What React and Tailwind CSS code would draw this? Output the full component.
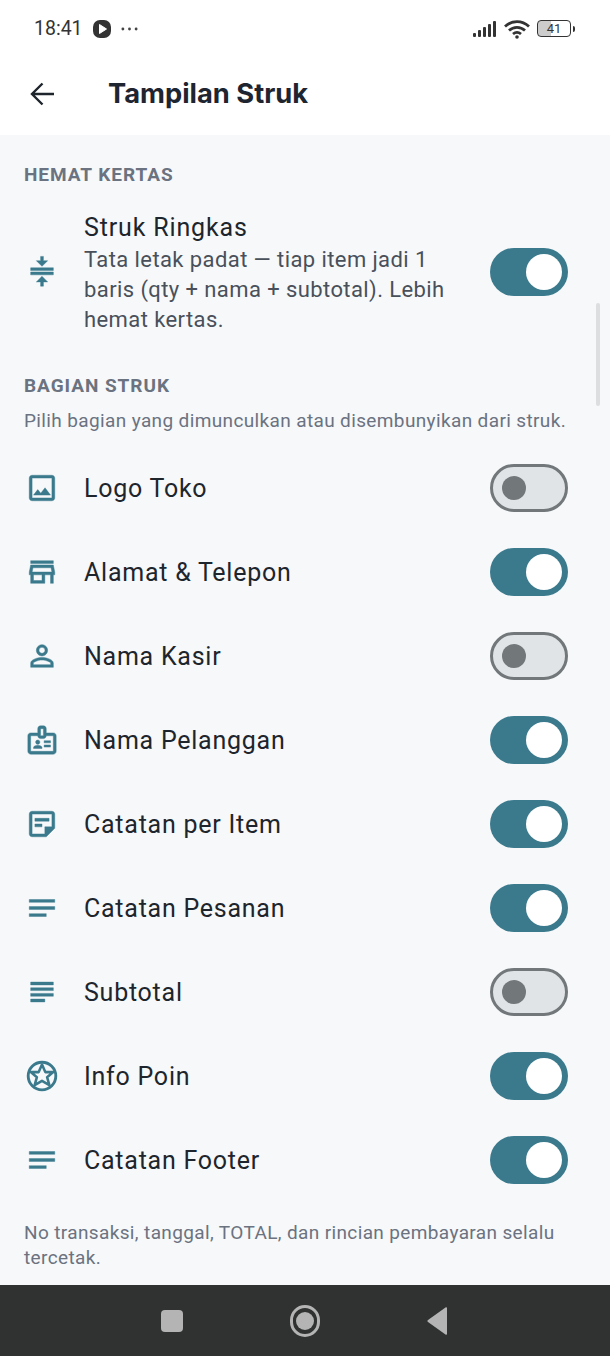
const TEAL = '#3a7a8c';

const ICONS = {
  compress: 'M4 12h16v2H4zM4 9h16v2H4zM16 4h-3V1h-2v3H8l4 4zM8 19h3v3h2v-3h3l-4-4z',
  image: 'M19 5v14H5V5h14m0-2H5c-1.1 0-2 .9-2 2v14c0 1.1.9 2 2 2h14c1.1 0 2-.9 2-2V5c0-1.1-.9-2-2-2zm-4.86 8.86l-3 3.87L9 13.14 6 17h12l-3.86-5.14z',
  store: 'M18.36 9l.6 3H5.04l.6-3h12.72M20 4H4v2h16V4zm0 3H4l-1 5v2h1v6h10v-6h4v6h2v-6h1v-2l-1-5zM6 18v-4h6v4H6z',
  person: 'M12 5.9c1.16 0 2.1.94 2.1 2.1s-.94 2.1-2.1 2.1S9.9 9.16 9.9 8s.94-2.1 2.1-2.1m0 9c2.97 0 6.1 1.46 6.1 2.1v1.1H5.9V17c0-.64 3.13-2.1 6.1-2.1M12 4C9.79 4 8 5.79 8 8s1.79 4 4 4 4-1.79 4-4-1.79-4-4-4zm0 9c-2.67 0-8 1.34-8 4v3h16v-3c0-2.66-5.33-4-8-4z',
  badge: 'M20 7h-5V4c0-1.1-.9-2-2-2h-2c-1.1 0-2 .9-2 2v3H4c-1.1 0-2 .9-2 2v11c0 1.1.9 2 2 2h16c1.1 0 2-.9 2-2V9c0-1.1-.9-2-2-2zM11 4h2v5h-2V4zm9 16H4V9h5c0 1.1.9 2 2 2h2c1.1 0 2-.9 2-2h5v11zM9 15c.83 0 1.5-.67 1.5-1.5S9.83 12 9 12s-1.5.67-1.5 1.5S8.17 15 9 15zm3 3H6v-.75c0-1 2-1.5 3-1.5s3 .5 3 1.5V18zm1.5-5.5H18V14h-4.5zm0 3H18V17h-4.5z',
  note: 'M19 5v9h-5v5H5V5h14m0-2H5c-1.1 0-2 .9-2 2v14c0 1.1.9 2 2 2h10l6-6V5c0-1.1-.9-2-2-2zm-7 11H7v-2h5v2zm5-4H7V8h10v2z',
  notes: 'M3 18h12v-2H3v2zM3 6v2h18V6H3zm0 7h18v-2H3v2z',
  subject: 'M14 17H4v2h10v-2zm6-8H4v2h16V9zM4 15h16v-2H4v2zM4 5v2h16V5H4z',
};

const ROWS = [
  { icon: 'image', label: 'Logo Toko', on: false },
  { icon: 'store', label: 'Alamat & Telepon', on: true },
  { icon: 'person', label: 'Nama Kasir', on: false },
  { icon: 'badge', label: 'Nama Pelanggan', on: true },
  { icon: 'note', label: 'Catatan per Item', on: true },
  { icon: 'notes', label: 'Catatan Pesanan', on: true },
  { icon: 'subject', label: 'Subtotal', on: false },
  { icon: 'star', label: 'Info Poin', on: true },
  { icon: 'notes', label: 'Catatan Footer', on: true },
];

function Icon({ name }) {
  if (name === 'star') {
    return (
      <svg viewBox="0 0 24 24" className="w-[36px] h-[36px] shrink-0 -mx-[1px]" fill="none" stroke={TEAL}>
        <circle cx="12" cy="12" r="9.2" strokeWidth="1.9" />
        <path d="M12 4.400l2.200 5h5.300l-4.100 3.400 1.500 5.300L12 15.200l-4.900 2.900 1.500-5.300-4.100-3.400h5.300z" strokeWidth="1.700" strokeLinejoin="round" />
      </svg>
    );
  }
  return (
    <svg viewBox="0 0 24 24" className="w-[34px] h-[34px] shrink-0" fill={TEAL} stroke={TEAL} strokeWidth="0.3">
      <path d={ICONS[name]} />
    </svg>
  );
}

function Toggle({ on }) {
  if (on) {
    return (
      <div className="w-[78px] h-[48px] rounded-full bg-[#3a7a8c] flex items-center justify-end pr-[6px] shrink-0">
        <div className="w-[36px] h-[36px] rounded-full bg-white" />
      </div>
    );
  }
  return (
    <div className="w-[78px] h-[48px] rounded-full bg-[#e1e4e6] border-[3px] border-[#72777a] flex items-center pl-[9px] shrink-0">
      <div className="w-[24px] h-[24px] rounded-full bg-[#72777a]" />
    </div>
  );
}

function Row({ icon, label, on }) {
  return (
    <div className="h-[84px] flex items-center pl-[25px] pr-[42px]">
      <div className="w-[34px] flex justify-center">
        <Icon name={icon} />
      </div>
      <div className="flex-1 pl-[25px] pt-[2px] text-[25px] tracking-[0.75px] text-[#1e252c]">{label}</div>
      <Toggle on={on} />
    </div>
  );
}

export default function App() {
  return (
    <div className="relative w-[610px] h-[1356px] flex flex-col overflow-hidden bg-[#f6f8fa]" style={{ fontFamily: 'Roboto, sans-serif' }}>
      {/* status bar */}
      <div className="h-[57px] bg-white flex items-center justify-between pl-[34px] pr-[35px] text-[#333]">
        <div className="flex items-center">
          <span className="text-[19.500px] leading-none">18:41</span>
          <svg viewBox="0 0 18 18" className="w-[18px] h-[18px] ml-[10px]">
            <rect x="0" y="0" width="18" height="18" rx="7" fill="#333" />
            <path d="M6.500 4.500l7 4.500-7 4.500z" fill="#fff" stroke="#fff" strokeLinejoin="round" />
          </svg>
          <svg viewBox="0 0 18 4" className="w-[17px] h-[4px] ml-[10px]" fill="#444">
            <circle cx="2" cy="2" r="1.500" />
            <circle cx="9" cy="2" r="1.500" />
            <circle cx="16" cy="2" r="1.500" />
          </svg>
        </div>
        <div className="flex items-center">
          <svg viewBox="0 0 24 18" className="w-[24px] h-[18px]" fill="#333">
            <rect x="0" y="13" width="3" height="4" rx="1" />
            <rect x="5" y="10" width="3" height="7" rx="1" />
            <rect x="10" y="7" width="3" height="10" rx="1" />
            <rect x="15" y="4" width="3" height="13" rx="1" />
            <rect x="20" y="1" width="3" height="16" rx="1" />
          </svg>
          <svg viewBox="0 0 26 20" className="w-[26px] h-[20px] ml-[7px]" fill="none" stroke="#333" strokeWidth="2.800">
            <path d="M1 7.500c7-6.500 17-6.500 24 0" />
            <path d="M5 11.500c4.600-4.200 11.400-4.200 16 0" />
            <path d="M9 15c2.400-2 5.600-2 8 0" />
            <circle cx="13" cy="18" r="1.800" fill="#333" stroke="none" />
          </svg>
          <div className="ml-[7px] w-[34px] h-[17px] rounded-[4px] border-[1.500px] border-[#333] flex items-center justify-center text-[13px] leading-none bg-[linear-gradient(90deg,#ccc_41%,transparent_41%)]">41</div>
          <div className="w-[2px] h-[6px] ml-[2px] bg-[#333] rounded-r" />
        </div>
      </div>

      {/* app bar */}
      <div className="h-[78px] bg-white flex items-center pl-[30px] pb-[4px]">
        <svg viewBox="0 0 24 24" className="w-[24px] h-[24px]" fill="none" stroke="#1e252c" strokeWidth="2.400">
          <path d="M24 12H2M12.500 1.500L2 12l10.500 10.500" />
        </svg>
        <div className="ml-[54px] text-[27.300px] font-bold text-[#1e2530]" style={{ fontFamily: 'Inter, sans-serif' }}>Tampilan Struk</div>
      </div>

      {/* content */}
      <div className="flex-1">
        <div className="pl-[24px] pt-[28px] text-[19px] leading-[24px] font-bold tracking-[0.95px] text-[#6b7280]">HEMAT KERTAS</div>
        <div className="mt-[23px] flex items-center pl-[25px] pr-[42px] h-[124px]">
          <div className="w-[34px] flex justify-center">
            <Icon name="compress" />
          </div>
          <div className="flex-1 pl-[25px] pr-[30px] pt-[2px]">
            <div className="text-[25px] leading-[34px] tracking-[0.85px] text-[#1e252c]">Struk Ringkas</div>
            <div className="text-[22px] leading-[30px] tracking-[0.41px] text-[#49505a]">Tata letak padat — tiap item jadi 1 baris (qty + nama + subtotal). Lebih hemat kertas.</div>
          </div>
          <Toggle on />
        </div>
        <div className="pl-[24px] mt-[40px] text-[19px] leading-[24px] font-bold tracking-[0.95px] text-[#6b7280]">BAGIAN STRUK</div>
        <div className="pl-[24px] mt-[10px] text-[19px] leading-[26px] tracking-[0.37px] text-[#6b7280]">Pilih bagian yang dimunculkan atau disembunyikan dari struk.</div>
        <div className="mt-[12px]">
          {ROWS.map((row) => (
            <Row key={row.label} {...row} />
          ))}
        </div>
        <div className="pl-[24px] pr-[40px] mt-[18px] text-[19px] leading-[25px] tracking-[0.37px] text-[#6b7280]">No transaksi, tanggal, TOTAL, dan rincian pembayaran selalu tercetak.</div>
      </div>

      {/* nav bar */}
      <div className="h-[71px] bg-[#303232] flex items-center justify-center gap-[107px] shrink-0 pr-[2px]">
        <div className="w-[22px] h-[22px] rounded-[4px] bg-[#b4b4b4]" />
        <div className="w-[30px] h-[32px] rounded-full border-[3px] border-[#b4b4b4] flex items-center justify-center">
          <div className="w-[18px] h-[18px] rounded-full bg-[#b4b4b4]" />
        </div>
        <svg viewBox="0 0 20 28" className="w-[20px] h-[28px]" fill="#b4b4b4">
          <path d="M20 1v26c0 .8-.8 1-1.500.500L1 15c-.8-.6-.8-1.400 0-2L18.500.500C19.200 0 20 .2 20 1z" />
        </svg>
      </div>

      {/* scrollbar */}
      <div className="absolute left-[596px] top-[303px] w-[4px] h-[103px] bg-[#dcdee0] rounded-full" />
    </div>
  );
}
